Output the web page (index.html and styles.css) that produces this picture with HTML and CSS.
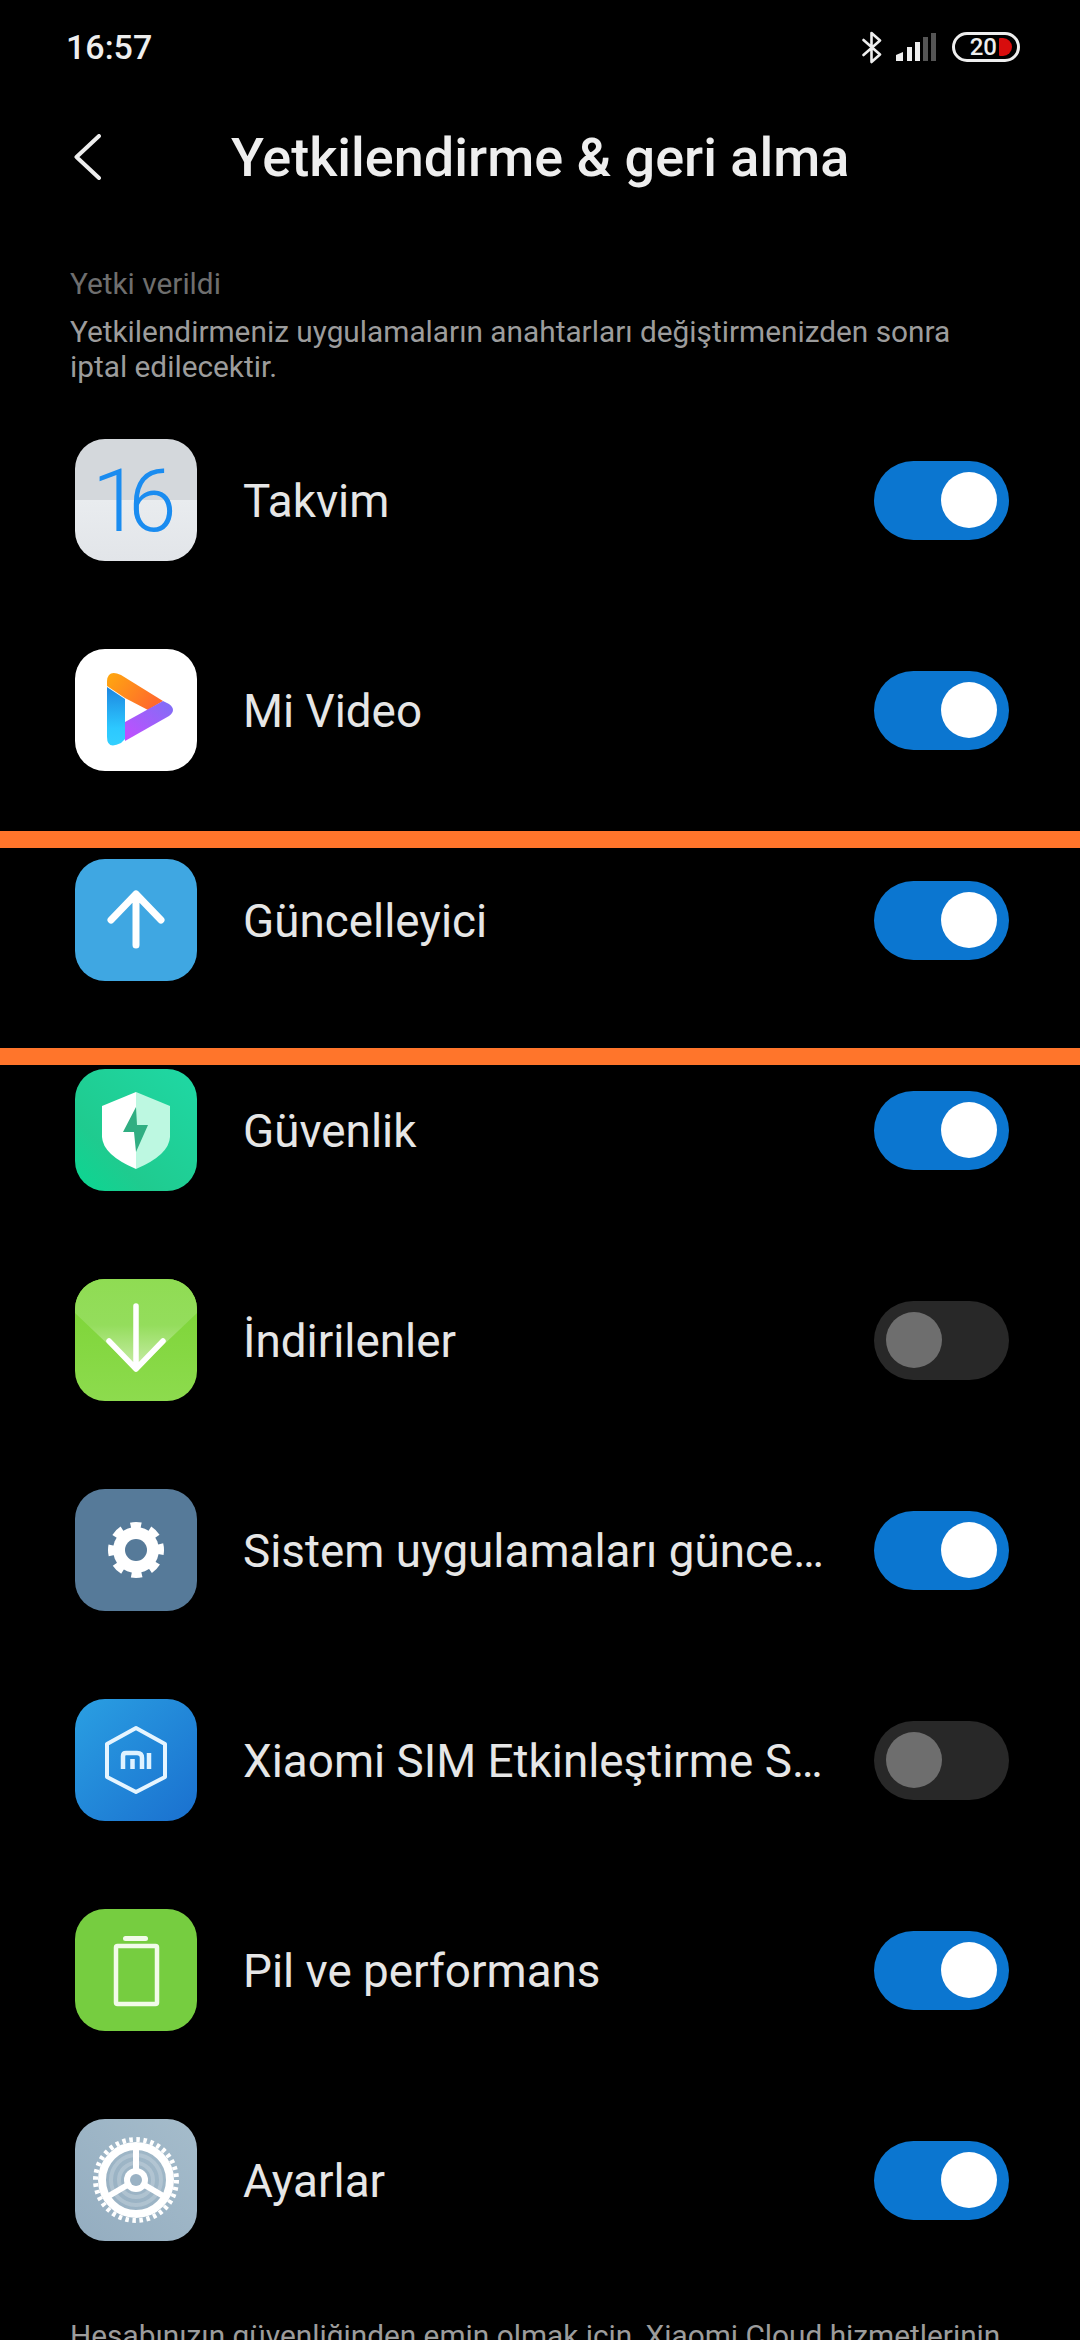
FILE: index.html
```html
<!DOCTYPE html>
<html lang="tr">

<head>
  <meta charset="UTF-8">
  <meta name="viewport" content="width=device-width, initial-scale=1.0">
  <title>Yetkilendirme &amp; geri alma</title>
  <link rel="stylesheet" href="styles.css">
</head>

<body>
  <div id="phone">
    <!-- status bar -->
    <div class="status">
      <span class="time">16:57</span>
      <div class="status-icons">
        <svg class="bt" width="20" height="33" viewBox="0 0 20 33">
          <path d="M1.5 9 L18 23.5 L9.5 31 V2 L18 9.5 L1.5 24" fill="none" stroke="#eee" stroke-width="2.6" stroke-linejoin="round" stroke-linecap="round" />
        </svg>
        <svg class="signal" width="40" height="28" viewBox="0 0 40 28">
          <path d="M0 22 L7 19 V28 H0 Z" fill="#eee" />
          <rect x="11" y="14" width="5" height="14" fill="#eee" />
          <rect x="19" y="9" width="5" height="19" fill="#eee" />
          <rect x="27" y="4" width="5" height="24" fill="#555" />
          <rect x="35" y="0" width="5" height="28" fill="#555" />
        </svg>
        <div class="battery">
          <span class="battery-num">20</span>
          <i class="battery-level"></i>
        </div>
      </div>
    </div>

    <!-- title -->
    <div class="header">
      <svg class="back" width="27" height="46" viewBox="0 0 27 46">
        <path d="M25 2 L2.500 23 L25 44" fill="none" stroke="#eee" stroke-width="4" stroke-linecap="round" stroke-linejoin="round" />
      </svg>
      <h1>Yetkilendirme &amp; geri alma</h1>
    </div>

    <div class="intro">
      <p class="intro-title">Yetki verildi</p>
      <p class="intro-text">Yetkilendirmeniz uygulamaların anahtarları değiştirmenizden sonra iptal edilecektir.</p>
    </div>

    <ul class="apps">
      <li>
        <svg class="app-icon" viewBox="0 0 122 122">
          <defs>
            <linearGradient id="calBottom" x1="0" y1="0" x2="0" y2="1">
              <stop offset="0" stop-color="#e9ecef" />
              <stop offset="1" stop-color="#e2e5e9" />
            </linearGradient>
            <clipPath id="calClip"><rect width="122" height="122" rx="30" /></clipPath>
          </defs>
          <g clip-path="url(#calClip)">
            <rect width="122" height="61" fill="#d4d8dc" />
            <rect y="61" width="122" height="61" fill="url(#calBottom)" />
          </g>
          <text class="cal-num" x="17" y="92">16</text>
        </svg>
        <span class="app-name">Takvim</span>
        <i class="toggle on"></i>
      </li>
      <li>
        <svg class="app-icon" viewBox="0 0 122 122">
          <defs>
            <linearGradient id="playBlue" x1="0" y1="0" x2="0" y2="1">
              <stop offset="0" stop-color="#1d86e0" />
              <stop offset="0.7" stop-color="#2cc8ff" />
              <stop offset="1" stop-color="#33d0ff" />
            </linearGradient>
            <linearGradient id="playOrange" x1="0" y1="0" x2="1" y2="0.5">
              <stop offset="0" stop-color="#ffa90f" />
              <stop offset="1" stop-color="#ff6a2c" />
            </linearGradient>
            <linearGradient id="playPurple" x1="0" y1="1" x2="1" y2="0">
              <stop offset="0" stop-color="#c44dff" />
              <stop offset="1" stop-color="#7d70f5" />
            </linearGradient>
          </defs>
          <rect width="122" height="122" rx="30" fill="#fff" />
          <path d="M32 38 L50 50 V90 L46 94 Q32 101 32 88 Z" fill="url(#playBlue)" />
          <path d="M32 37 V32 Q33 20 46 26 L88 52 L73 61 L50 49 Z" fill="url(#playOrange)" />
          <path d="M50 73 L88 52 L94 55 Q102 61 94 67 L50 92 Z" fill="url(#playPurple)" />
        </svg>
        <span class="app-name">Mi Video</span>
        <i class="toggle on"></i>
      </li>
      <li>
        <svg class="app-icon" viewBox="0 0 122 122">
          <rect width="122" height="122" rx="30" fill="#3fa7e2" />
          <path d="M36 61 L61 35 L86 61 M61 35 V86" fill="none" stroke="#fff" stroke-width="7" stroke-linecap="round" stroke-linejoin="round" />
        </svg>
        <span class="app-name">Güncelleyici</span>
        <i class="toggle on"></i>
      </li>
      <li>
        <svg class="app-icon" viewBox="0 0 122 122">
          <defs>
            <linearGradient id="shieldBg" x1="1" y1="0" x2="0" y2="1">
              <stop offset="0" stop-color="#1fd8a4" />
              <stop offset="0.7" stop-color="#1fcb8f" />
              <stop offset="1" stop-color="#0ad792" />
            </linearGradient>
          </defs>
          <rect width="122" height="122" rx="30" fill="url(#shieldBg)" />
          <path d="M61 23 L27 37 V68 Q28 86 61 100 Z" fill="#fff" />
          <path d="M61 23 L95 37 V68 Q94 86 61 100 Z" fill="#bdf8e1" />
          <path d="M61 38 L48 63 H59 L61 83 L73 56 H62 Z" fill="#30ae82" />
        </svg>
        <span class="app-name">Güvenlik</span>
        <i class="toggle on"></i>
      </li>
      <li>
        <svg class="app-icon" viewBox="0 0 122 122">
          <defs>
            <linearGradient id="dlBg" x1="0" y1="0" x2="0" y2="1">
              <stop offset="0" stop-color="#7ad332" />
              <stop offset="1" stop-color="#8ddb4e" />
            </linearGradient>
            <linearGradient id="dlFold" x1="0" y1="0" x2="0" y2="1">
              <stop offset="0" stop-color="#8fdc53" />
              <stop offset="0.5" stop-color="#94dd5c" />
              <stop offset="1" stop-color="#cdeeae" />
            </linearGradient>
            <clipPath id="dlClip"><rect width="122" height="122" rx="30" /></clipPath>
          </defs>
          <rect width="122" height="122" rx="30" fill="url(#dlBg)" />
          <path d="M0 0 H122 V34 L61 92 L0 34 Z" fill="url(#dlFold)" clip-path="url(#dlClip)" />
          <path d="M34 62 L61 90 L88 62 M61 27 V90" fill="none" stroke="#fff" stroke-width="5.500" stroke-linecap="round" stroke-linejoin="round" />
        </svg>
        <span class="app-name">İndirilenler</span>
        <i class="toggle"></i>
      </li>
      <li>
        <svg class="app-icon" viewBox="0 0 122 122">
          <rect width="122" height="122" rx="30" fill="#567a99" />
          <circle cx="61" cy="61" r="23" fill="#fff" />
          <circle cx="61" cy="61" r="24.500" fill="none" stroke="#fff" stroke-width="7" stroke-dasharray="10.240 9" transform="rotate(-14 61 61)" />
          <circle cx="61" cy="61" r="11" fill="#567a99" />
        </svg>
        <span class="app-name">Sistem uygulamaları güncelleyicisi</span>
        <i class="toggle on"></i>
      </li>
      <li>
        <svg class="app-icon" viewBox="0 0 122 122">
          <defs>
            <linearGradient id="miBg" x1="0" y1="0" x2="1" y2="1">
              <stop offset="0" stop-color="#2a9fe2" />
              <stop offset="1" stop-color="#1a70cf" />
            </linearGradient>
          </defs>
          <rect width="122" height="122" rx="30" fill="url(#miBg)" />
          <path d="M61 29 L90 45 V78 L61 93 L32 78 V45 Z" fill="none" stroke="#e6f5ff" stroke-width="4" stroke-linejoin="round" />
          <path d="M48 70 V57 Q48 54 51 54 H62 Q67 54 67 59 V70 M57.500 60 V70 M74 54 V70" fill="none" stroke="#dff2ff" stroke-width="4.500" />
        </svg>
        <span class="app-name">Xiaomi SIM Etkinleştirme Servisi</span>
        <i class="toggle"></i>
      </li>
      <li>
        <svg class="app-icon" viewBox="0 0 122 122">
          <rect width="122" height="122" rx="30" fill="#76cd40" />
          <rect x="48" y="27" width="25" height="5" rx="2.500" fill="#f2fbe9" />
          <rect x="41" y="37" width="41" height="58" rx="1.500" fill="none" stroke="#f2fbe9" stroke-width="4.500" />
        </svg>
        <span class="app-name">Pil ve performans</span>
        <i class="toggle on"></i>
      </li>
      <li>
        <svg class="app-icon" viewBox="0 0 122 122">
          <defs>
            <linearGradient id="setBg" x1="1" y1="0" x2="0" y2="1">
              <stop offset="0" stop-color="#a5bccb" />
              <stop offset="1" stop-color="#94adc0" />
            </linearGradient>
          </defs>
          <rect width="122" height="122" rx="30" fill="url(#setBg)" />
          <circle cx="61" cy="61" r="25" fill="none" stroke="#fff" stroke-opacity=".2" stroke-width="4" />
          <circle cx="61" cy="61" r="17" fill="none" stroke="#fff" stroke-opacity=".2" stroke-width="4" />
          <circle cx="61" cy="61" r="34" fill="none" stroke="#fff" stroke-width="8" />
          <circle cx="61" cy="61" r="40.500" fill="none" stroke="#fff" stroke-width="5" stroke-dasharray="3.530 3.540" />
          <path d="M61 61 V28 M61 61 L32 78 M61 61 L90 78" fill="none" stroke="#fff" stroke-width="6" />
          <circle cx="61" cy="61" r="12" fill="#fff" />
          <circle cx="61" cy="61" r="6" fill="#9ab2c4" />
        </svg>
        <span class="app-name">Ayarlar</span>
        <i class="toggle on"></i>
      </li>
    </ul>

    <p class="foot-note">Hesabınızın güvenliğinden emin olmak için, Xiaomi Cloud hizmetlerinin</p>

    <!-- the two orange marks lie over the list -->
    <div class="mark mark-top"></div>
    <div class="mark mark-bottom"></div>
  </div>
</body>

</html>
```

FILE: styles.css
```css
* {
  padding: 0;
  margin: 0;
  box-sizing: border-box;
}

html,
body {
  background-color: #000;
}

#phone {
  position: relative;
  width: 1080px;
  height: 2340px;
  overflow: hidden;
  background-color: #000;
  color: #eee;
  font-family: Roboto, "Noto Sans", sans-serif;
}

/* status bar */
.status {
  display: flex;
  justify-content: space-between;
  align-items: center;
  height: 94px;
  padding: 0 60px 0 66px;
}

.time {
  font-size: 34px;
  font-weight: 500;
  letter-spacing: 0;
}

.status-icons {
  display: flex;
  align-items: center;
}

.bt {
  margin-right: 14px;
}

.signal {
  margin-right: 16px;
}

.battery {
  position: relative;
  display: flex;
  justify-content: flex-end;
  align-items: center;
  width: 68px;
  height: 30px;
  padding-right: 5px;
  border: 3px solid #eee;
  border-radius: 15px;
}

.battery-num {
  font-size: 24px;
  font-weight: 500;
  line-height: 24px;
  margin-right: 2px;
}

.battery-level {
  display: block;
  width: 13px;
  height: 18px;
  background-color: #d80d0d;
  border-radius: 1px 9px 9px 1px;
}

/* title */
.header {
  display: flex;
  align-items: center;
  height: 126px;
  padding-left: 74px;
}

.header h1 {
  margin-left: 130px;
  font-size: 54px;
  font-weight: 500;
  color: #eee;
}

.intro {
  padding: 44px 70px 0;
}

.intro-title {
  font-size: 29.800px;
  line-height: 40px;
  color: #6e6e6e;
}

.intro-text {
  margin-top: 10px;
  width: 900px;
  font-size: 29.800px;
  line-height: 35px;
  color: #9c9c9c;
}

/* app list */
.apps {
  list-style: none;
  margin-top: 11px;
}

.apps li {
  display: flex;
  align-items: center;
  height: 210px;
  padding: 0 71px 0 75px;
}

.app-icon {
  flex: none;
  width: 122px;
  height: 122px;
}

.cal-num {
  font-family: Roboto, sans-serif;
  font-size: 87px;
  font-weight: 300;
  letter-spacing: -12px;
  fill: #1a8cf0;
}

.app-name {
  flex: 1;
  min-width: 0;
  margin: 0 44px 0 46px;
  padding-top: 2px;
  overflow: hidden;
  white-space: nowrap;
  text-overflow: ellipsis;
  font-size: 45.800px;
  color: #e6e6e6;
}

.toggle {
  flex: none;
  display: flex;
  align-items: center;
  width: 135px;
  height: 79px;
  padding: 0 12px;
  border-radius: 40px;
  background-color: #282828;
}

.toggle::after {
  content: "";
  width: 56px;
  height: 56px;
  border-radius: 50%;
  background-color: #6e6e6e;
}

.toggle.on {
  justify-content: flex-end;
  background-color: #0b76d0;
}

.toggle.on::after {
  background-color: #fff;
}

.foot-note {
  margin-top: 33px;
  padding-left: 70px;
  white-space: nowrap;
  font-size: 29.800px;
  color: #9c9c9c;
}

/* orange marks */
.mark {
  position: absolute;
  left: 0;
  width: 100%;
  height: 17px;
  background-color: #ff752b;
}

.mark-top {
  top: 831px;
}

.mark-bottom {
  top: 1048px;
}
```
